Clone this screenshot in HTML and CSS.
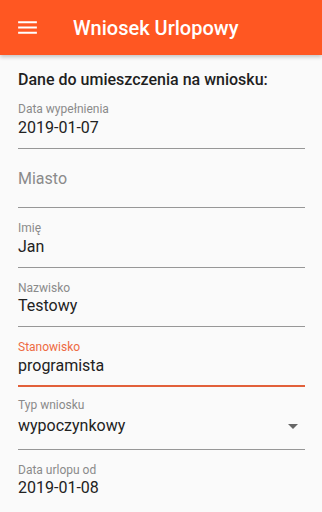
FILE: index.html
```html
<!DOCTYPE html>
<html lang="pl">
<head>
<meta charset="utf-8">
<title>Wniosek Urlopowy</title>
<link rel="stylesheet" href="styles.css">
</head>
<body>
<header class="appbar">
  <svg class="menu-icon" viewBox="0 0 24 24" width="25" height="25" aria-hidden="true">
    <path d="M3 18h18v-2H3v2zm0-5h18v-2H3v2zm0-7v2h18V6H3z" fill="#ffffff"/>
  </svg>
  <h1 class="title">Wniosek Urlopowy</h1>
</header>
<main class="content">
  <h2 class="heading">Dane do umieszczenia na wniosku:</h2>

  <div class="field">
    <div class="label">Data wypełnienia</div>
    <div class="value">2019-01-07</div>
  </div>

  <div class="field field-empty">
    <div class="placeholder">Miasto</div>
  </div>

  <div class="field">
    <div class="label">Imię</div>
    <div class="value">Jan</div>
  </div>

  <div class="field">
    <div class="label">Nazwisko</div>
    <div class="value">Testowy</div>
  </div>

  <div class="field field-focused">
    <div class="label">Stanowisko</div>
    <div class="value">programista</div>
  </div>

  <div class="field field-select">
    <div class="label">Typ wniosku</div>
    <div class="select-row">
      <div class="value">wypoczynkowy</div>
      <span class="arrow"></span>
    </div>
  </div>

  <div class="field field-last">
    <div class="label">Data urlopu od</div>
    <div class="value">2019-01-08</div>
  </div>
</main>
</body>
</html>
```

FILE: styles.css
```css
html, body {
  margin: 0;
  padding: 0;
  background: #fafafa;
  font-family: Roboto, "Liberation Sans", sans-serif;
}

body {
  height: 512px;
  overflow: hidden;
}

.appbar {
  position: relative;
  z-index: 2;
  height: 55px;
  background: #ff5722;
  display: flex;
  align-items: center;
  box-shadow: 0 2px 4px rgba(0, 0, 0, 0.22);
}

.menu-icon {
  display: block;
  margin-left: 15px;
  flex: none;
}

.title {
  margin: 0 0 0 33px;
  font-size: 20px;
  font-weight: 500;
  line-height: 24px;
  color: #ffffff;
}

.content {
  padding: 16px 17px 0 18px;
}

.heading {
  margin: 0;
  font-size: 16px;
  font-weight: 500;
  line-height: 18px;
  color: #1f1f1f;
}

.field {
  padding: 13px 0 10px;
  border-bottom: 1px solid #979797;
}

.label {
  font-size: 12px;
  line-height: 14px;
  color: #8a8a8a;
}

.value {
  margin-top: 1.5px;
  font-size: 16px;
  line-height: 20px;
  color: #222222;
}

.field-empty {
  padding: 20px 0 18.5px;
}

.placeholder {
  font-size: 16px;
  line-height: 20px;
  color: #8a8a8a;
}

.field-focused {
  padding-bottom: 9px;
  border-bottom: 2px solid #e2603a;
}

.field-focused .label {
  color: #ee6a42;
}

.field-select {
  padding: 11px 0 12.5px;
}

.select-row {
  display: flex;
  align-items: center;
  justify-content: space-between;
  margin-top: 4.5px;
}

.select-row .value {
  margin-top: 0;
}

.arrow {
  width: 0;
  height: 0;
  margin-right: 7px;
  border-left: 5px solid transparent;
  border-right: 5px solid transparent;
  border-top: 5px solid #666666;
}

.field-last {
  padding-bottom: 16px;
}
```
